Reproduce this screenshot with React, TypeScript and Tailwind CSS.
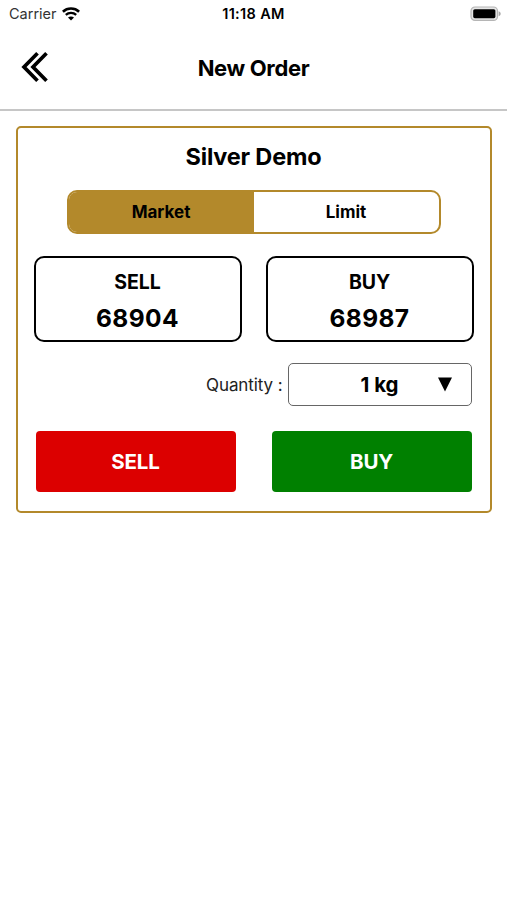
import { useState } from "react";

type OrderType = "Market" | "Limit";

type Quote = {
  side: string;
  price: number;
};

const ORDER_TYPES: OrderType[] = ["Market", "Limit"];

const QUOTES: Quote[] = [
  { side: "SELL", price: 68904 },
  { side: "BUY", price: 68987 },
];

function WifiIcon() {
  return (
    <svg width="18" height="14" viewBox="0 0 18 14" fill="none" stroke="#000">
      <path d="M.9 4.7C5.4.5 12.6.5 17.1 4.7" strokeWidth="2.6" />
      <path d="M3.8 7.9C6.7 5.2 11.3 5.2 14.2 7.9" strokeWidth="2.3" />
      <path d="M9 13.4L6 10.6C7.8 9.1 10.2 9.1 12 10.6Z" fill="#000" stroke="none" />
    </svg>
  );
}

function BatteryIcon() {
  return (
    <svg width="32" height="16" viewBox="0 0 32 16" fill="none">
      <rect x="1" y="1" width="26.5" height="13.4" rx="4" fill="#e6e6e6" stroke="#b5b5b5" strokeWidth="1.2" />
      <rect x="3.2" y="3.2" width="22.2" height="9" rx="1.6" fill="#000" />
      <path d="M28.6 5.2C31.4 6 31.4 9.4 28.6 10.2Z" fill="#a8a8a8" />
    </svg>
  );
}

function BackIcon() {
  return (
    <svg width="28" height="32" viewBox="0 0 28 32" fill="none" stroke="#000" strokeWidth="3.7">
      <path d="M16.5 2.3L3 16L16.5 29.7" />
      <path d="M25.5 2.3L12 16L25.5 29.7" />
    </svg>
  );
}

export default function App() {
  const [orderType, setOrderType] = useState<OrderType>("Market");

  return (
    <div className="h-screen w-full overflow-hidden bg-white font-['Inter',sans-serif] text-black">
      {/* STATUS BAR */}
      <div className="grid h-7 grid-cols-3 items-center px-[9px]">
        <div className="flex items-center gap-[5px]">
          <span className="text-[14.5px] text-[#333]">Carrier</span>
          <WifiIcon />
        </div>
        <span className="text-center text-[14.5px] font-semibold tracking-[0.35px]">
          11:18 AM
        </span>
        <div className="-mr-1 flex justify-end">
          <BatteryIcon />
        </div>
      </div>

      {/* HEADER */}
      <header className="grid h-[83px] grid-cols-[60px_1fr_60px] items-center border-b-2 border-[#c6c6c6]">
        <button className="pb-[3px] pl-[21px]" aria-label="Back">
          <BackIcon />
        </button>
        <h1 className="text-center text-[22px] font-bold tracking-[-0.35px]">New Order</h1>
      </header>

      {/* ORDER CARD */}
      <main className="mx-[15.5px] mt-[14.5px] h-[387px] rounded-[5px] border-[2.5px] border-[#b3892b] px-4">
        <h2 className="mt-[11px] text-center text-[23.5px] leading-9 font-bold tracking-[-0.2px]">
          Silver Demo
        </h2>

        <div className="mx-auto mt-[15px] grid h-11 w-[374px] grid-cols-2 overflow-hidden rounded-[10px] border-[2.5px] border-[#b3892b]">
          {ORDER_TYPES.map((type) => (
            <button
              key={type}
              onClick={() => setOrderType(type)}
              className={
                type === orderType
                  ? "bg-[#b3892b] pt-[2px] text-[17px] font-bold"
                  : "pt-[2px] text-[17px] font-bold"
              }
            >
              {type}
            </button>
          ))}
        </div>

        <div className="mt-[22px] flex justify-between">
          {QUOTES.map((quote) => (
            <div
              key={quote.side}
              className="flex h-[86px] w-[208px] flex-col items-center rounded-[10px] border-[2.5px] border-black pt-[8px]"
            >
              <span className="text-[19.5px] leading-8 font-bold tracking-[-0.1px]">
                {quote.side}
              </span>
              <span className="mt-[2px] text-[24.5px] leading-9 font-bold tracking-[0.4px]">
                {quote.price}
              </span>
            </div>
          ))}
        </div>

        <div className="mt-[21.5px] mr-[2px] flex items-center justify-end gap-[5px]">
          <span className="pt-[2px] text-[17px] tracking-[-0.1px] text-[#222]">Quantity :</span>
          <button className="grid h-[43px] w-[184px] grid-cols-[1fr_auto_1fr] items-center rounded-[5px] border border-[#666]">
            <span className="col-start-2 pt-[2px] text-[20.5px] font-bold">1 kg</span>
            <svg className="mr-[19px] justify-self-end" width="14" height="15" viewBox="0 0 14 15">
              <path d="M0 0.5H14L7 14.5Z" fill="#000" />
            </svg>
          </button>
        </div>

        <div className="mt-[24.5px] flex justify-between px-[2px] text-[20.5px] font-bold tracking-[-0.2px] text-white">
          <button className="h-[61px] w-[200px] rounded-[4px] bg-[#dc0000] pt-[2px]">SELL</button>
          <button className="h-[61px] w-[200px] rounded-[4px] bg-[#008000] pt-[2px]">BUY</button>
        </div>
      </main>
    </div>
  );
}
